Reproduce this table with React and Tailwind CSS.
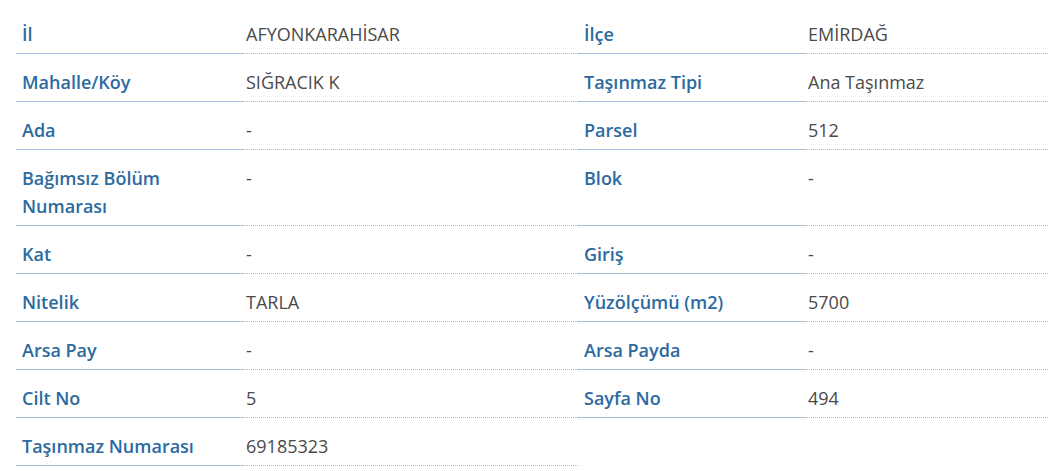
import React from "react";

const rows = [
  ["İl", "AFYONKARAHİSAR", "İlçe", "EMİRDAĞ"],
  ["Mahalle/Köy", "SIĞRACIK K", "Taşınmaz Tipi", "Ana Taşınmaz"],
  ["Ada", "-", "Parsel", "512"],
  ["Bağımsız Bölüm Numarası", "-", "Blok", "-"],
  ["Kat", "-", "Giriş", "-"],
  ["Nitelik", "TARLA", "Yüzölçümü (m2)", "5700"],
  ["Arsa Pay", "-", "Arsa Payda", "-"],
  ["Cilt No", "5", "Sayfa No", "494"],
  ["Taşınmaz Numarası", "69185323", null, null],
];

function Label({ children }) {
  return (
    <div className="border-b border-solid border-[#a3c0dc] pl-[6px] pr-4 pt-[14px] pb-[5px] text-[18px] leading-[28px] font-semibold text-[#2c6aa0]">
      {children}
    </div>
  );
}

function Value({ children }) {
  return (
    <div className="border-b border-dotted border-[#8dbde0] pl-[4px] pt-[14px] pb-[5px] text-[18px] leading-[28px] text-[#4a4a4a]">
      {children}
    </div>
  );
}

export default function App() {
  return (
    <div
      className="w-[1050px] h-[471px] bg-white pt-[6px] pl-4 overflow-hidden"
      style={{ fontFamily: '"Open Sans", "Liberation Sans", sans-serif' }}
    >
      <div className="grid grid-cols-[226px_336px_226px_244px]">
        {rows.map((r, i) => (
          <React.Fragment key={i}>
            <Label>{r[0]}</Label>
            <Value>{r[1]}</Value>
            {r[2] !== null ? (
              <>
                <Label>{r[2]}</Label>
                <Value>{r[3]}</Value>
              </>
            ) : (
              <>
                <div />
                <div />
              </>
            )}
          </React.Fragment>
        ))}
      </div>
    </div>
  );
}
